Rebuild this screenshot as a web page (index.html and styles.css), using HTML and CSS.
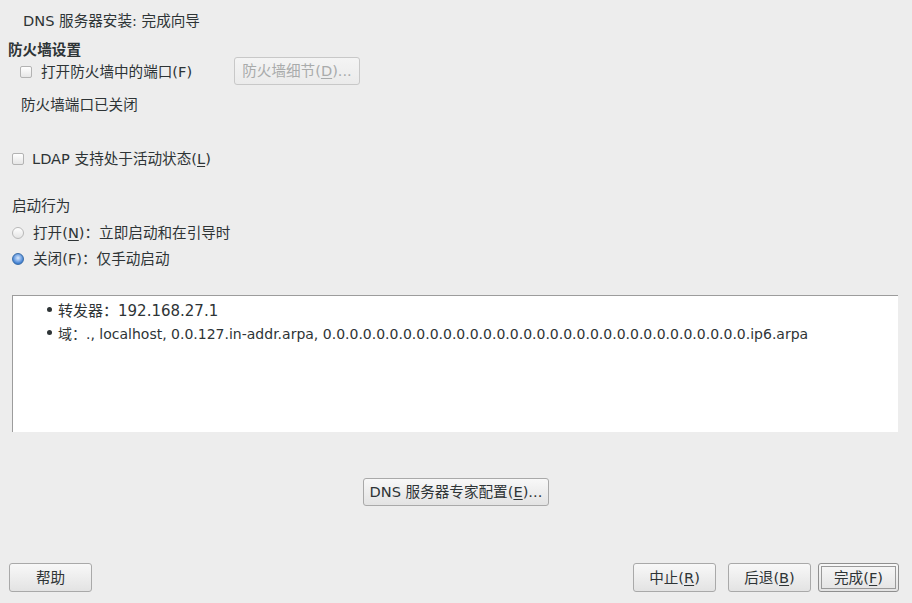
FILE: index.html
```html
<!DOCTYPE html>
<html lang="zh-CN">
<head>
<meta charset="utf-8">
<title>DNS 服务器安装: 完成向导</title>
<link rel="stylesheet" href="styles.css">
</head>
<body>
<div class="page">
  <div class="title">DNS 服务器安装: 完成向导</div>
  <div class="fw-head">防火墙设置</div>
  <div class="fw-row">
    <label class="check fw-check"><span class="box"></span><span>打开防火墙中的端口(F)</span></label>
    <button class="btn btn-disabled fw-btn">防火墙细节(<u>D</u>)...</button>
  </div>
  <div class="fw-status">防火墙端口已关闭</div>
  <label class="check ldap"><span class="box"></span><span>LDAP 支持处于活动状态(<u>L</u>)</span></label>
  <div class="startup-head">启动行为</div>
  <label class="radio r1"><span class="dot"></span><span>打开(<u>N</u>)：立即启动和在引导时</span></label>
  <label class="radio r2"><span class="dot on"></span><span>关闭(F)：仅手动启动</span></label>
  <div class="summary">
    <ul>
      <li><span class="bullet"></span><span class="big">转发器：192.168.27.1</span></li>
      <li><span class="bullet"></span><span>域：., localhost, 0.0.127.in-addr.arpa, 0.0.0.0.0.0.0.0.0.0.0.0.0.0.0.0.0.0.0.0.0.0.0.0.0.0.0.0.0.0.0.0.ip6.arpa</span></li>
    </ul>
  </div>
  <div class="expert-row"><button class="btn expert">DNS 服务器专家配置(<u>E</u>)...</button></div>
  <div class="bottom">
    <button class="btn nav">帮助</button>
    <div class="nav-right">
      <button class="btn nav">中止(<u>R</u>)</button>
      <button class="btn nav back">后退(<u>B</u>)</button>
      <button class="btn nav finish">完成(<u>F</u>)</button>
    </div>
  </div>
</div>
</body>
</html>
```
FILE: styles.css
```css
* { box-sizing: border-box; }
html, body { margin: 0; padding: 0; }
body {
  width: 912px;
  height: 603px;
  background: #ededed;
  color: #2e3436;
  font-family: "DejaVu Sans", "Noto Sans CJK SC", sans-serif;
  font-size: 14.6px;
  overflow: hidden;
}
.page { display: flex; flex-direction: column; height: 603px; }
u { text-decoration: underline; text-underline-offset: 2px; }

.title { height: 17px; line-height: 17px; margin: 12px 0 0 23px; }
.fw-head { height: 17px; line-height: 17px; margin: 12px 0 0 8px; font-weight: bold; }

.fw-row { display: flex; align-items: center; height: 28px; margin-top: -1px; padding-left: 20px; }
.fw-check { width: 214px; }

.check, .radio { display: flex; align-items: center; gap: 9px; height: 17px; line-height: 17px; }
.box {
  width: 12px; height: 12px; flex: none;
  border: 1px solid #b3b3b3; border-radius: 2px;
  background: linear-gradient(#ffffff, #e6e6e6);
  margin-top: 1px;
}
.dot {
  width: 12px; height: 12px; flex: none; border-radius: 50%;
  border: 1px solid #b8b8b8;
  background: linear-gradient(#ffffff, #e4e4e4);
  margin-top: 1px;
}
.dot.on {
  border-color: #3b6ea8;
  background: radial-gradient(circle at 50% 40%, #d9e8fb 0, #8db5ea 35%, #3f7fd1 70%, #2f66b0 100%);
}

.fw-status { height: 17px; line-height: 17px; margin: 11px 0 0 21px; }
.ldap { margin: 37px 0 0 12px; gap: 8px; }
.startup-head { height: 17px; line-height: 17px; margin: 30px 0 0 12px; }
.r1 { margin: 10px 0 0 12px; gap: 9px; }
.r2 { margin: 9px 0 0 12px; gap: 9px; }

.summary {
  margin: 28px 0 0 12px;
  width: 886px; height: 137px;
  background: #ffffff;
  border-top: 1px solid #9c9c9c;
  border-left: 1px solid #9c9c9c;
  padding-top: 4px;
  font-size: 14px;
}
.summary ul { list-style: none; margin: 0; padding: 0 0 0 34px; }
.summary li { display: flex; align-items: center; height: 23px; line-height: 23px; white-space: nowrap; }
.summary .big { font-size: 15px; }
.bullet { width: 5px; height: 5px; border-radius: 50%; background: #2e3436; margin-right: 6px; flex: none; margin-top: -4px; }

.btn {
  font-family: inherit; font-size: 14.6px; color: #2e3436;
  height: 28px; padding: 0 6px;
  border: 1px solid #a9a9a9; border-radius: 3px;
  background: linear-gradient(#f8f8f8, #e3e3e3);
  line-height: 26px;
  white-space: nowrap;
}
.btn-disabled {
  color: #a9abab;
  border-color: #c8c8c8;
  background: linear-gradient(#f4f4f4, #ebebeb);
}
.fw-btn { width: 126px; }

.expert-row { display: flex; justify-content: center; margin-top: 46px; }
.expert { width: 186px; margin-left: -1px; }

.bottom { display: flex; justify-content: space-between; margin-top: 57px; padding: 0 13px 0 9px; }
.nav { width: 83px; height: 29px; }
.nav-right { display: flex; gap: 12px; }
.back { margin-right: -5px; }
.finish { width: 81px; outline: 1px solid #9a9a9a; outline-offset: -4px; border-color: #8f8f8f; }
```
